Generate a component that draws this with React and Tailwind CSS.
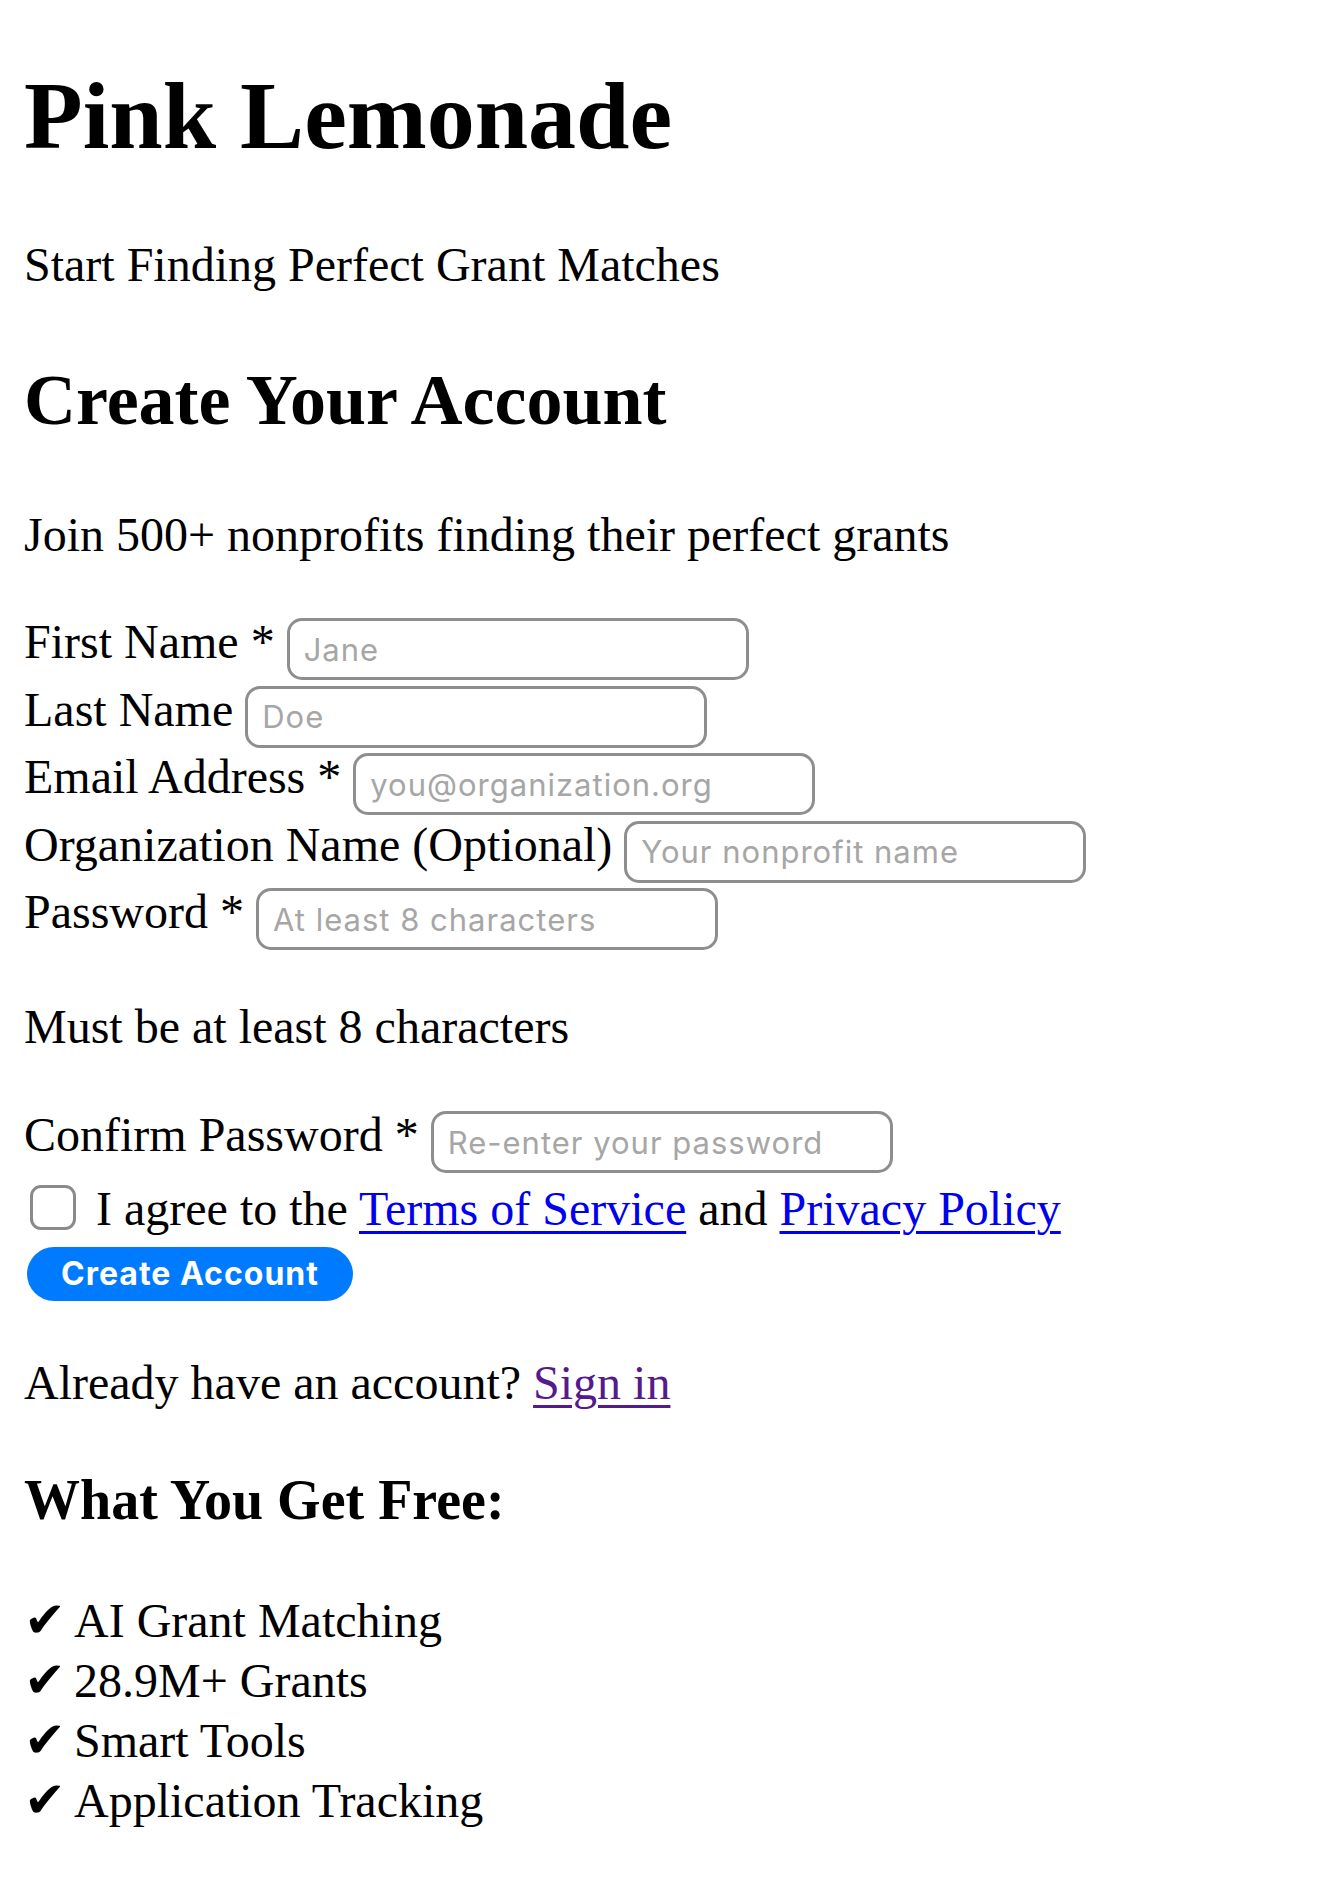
import { useState } from "react";

const fields = [
  { label: "First Name *", placeholder: "Jane", type: "text" },
  { label: "Last Name", placeholder: "Doe", type: "text" },
  { label: "Email Address *", placeholder: "you@organization.org", type: "email" },
  { label: "Organization Name (Optional)", placeholder: "Your nonprofit name", type: "text" },
  { label: "Password *", placeholder: "At least 8 characters", type: "password" },
];

const perks = ["AI Grant Matching", "28.9M+ Grants", "Smart Tools", "Application Tracking"];

const Field = ({ label, placeholder, type }) => (
  <div className="flex h-[62px] items-start">
    <label className="whitespace-nowrap leading-[48px]">{label}</label>
    <input
      type={type}
      placeholder={placeholder}
      className="ml-[12px] h-[62px] w-[462px] shrink-0 rounded-[15px] border-[3px] border-[#8e8e8e] bg-white px-[14px] font-['Inter',sans-serif] text-[31px] tracking-[1px] text-black outline-none placeholder:text-[#a6a6a6]"
    />
  </div>
);

export default function App() {
  const [agree, setAgree] = useState(false);

  return (
    <div className="min-h-screen bg-white px-[24px] pt-[61px] font-['Liberation_Serif','Times_New_Roman',serif] text-[48px] text-black">
      <h1 className="text-[96px] font-bold leading-[110px]">Pink Lemonade</h1>
      <p className="mt-[66px] leading-[55px]">Start Finding Perfect Grant Matches</p>

      <h2 className="mt-[67px] text-[72px] font-bold leading-[83px]">Create Your Account</h2>
      <p className="mt-[65px] leading-[55px]">Join 500+ nonprofits finding their perfect grants</p>

      <form className="mt-[56px]" onSubmit={(e) => e.preventDefault()}>
        <div className="flex flex-col gap-[5.5px]">
          {fields.map((f) => (
            <Field key={f.label} {...f} />
          ))}
        </div>

        <p className="mt-[53px] leading-[48px]">Must be at least 8 characters</p>

        <div className="mt-[60px]">
          <Field label="Confirm Password *" placeholder="Re-enter your password" type="password" />
        </div>

        <div className="mt-[12px] flex items-start">
          <input
            type="checkbox"
            checked={agree}
            onChange={(e) => setAgree(e.target.checked)}
            className="ml-[6px] h-[45px] w-[46px] shrink-0 appearance-none rounded-[11px] border-[3px] border-[#8a8a8a] bg-white checked:bg-[#007aff]"
          />
          <span className="ml-[20px] whitespace-nowrap leading-[48px]">
            I agree to the{" "}
            <a href="#" className="text-[#0000ee] underline decoration-[3px] underline-offset-[6px]">
              Terms of Service
            </a>{" "}
            and{" "}
            <a href="#" className="text-[#0000ee] underline decoration-[3px] underline-offset-[6px]">
              Privacy Policy
            </a>
          </span>
        </div>

        <button
          type="submit"
          className="ml-[3px] mt-[14px] flex h-[54px] w-[326px] items-center justify-center rounded-full bg-[#007aff] font-['Inter',sans-serif] text-[32px] font-bold tracking-[1px] text-white"
        >
          Create Account
        </button>
      </form>

      <p className="mt-[58px] leading-[48px]">
        Already have an account?{" "}
        <a href="#" className="text-[#551a8b] underline decoration-[3px] underline-offset-[6px]">
          Sign in
        </a>
      </p>

      <h3 className="mt-[61px] text-[56px] font-bold leading-[64px]">What You Get Free:</h3>

      <div className="mt-[58px] pb-[60px]">
        {perks.map((p) => (
          <div key={p} className="flex h-[60px] items-baseline overflow-hidden leading-[60px]">
            <span className="w-[50px] shrink-0 font-['DejaVu_Sans',sans-serif] text-[50px] font-bold leading-[60px]">✔</span>
            <span className="leading-[60px]">{p}</span>
          </div>
        ))}
      </div>
    </div>
  );
}
